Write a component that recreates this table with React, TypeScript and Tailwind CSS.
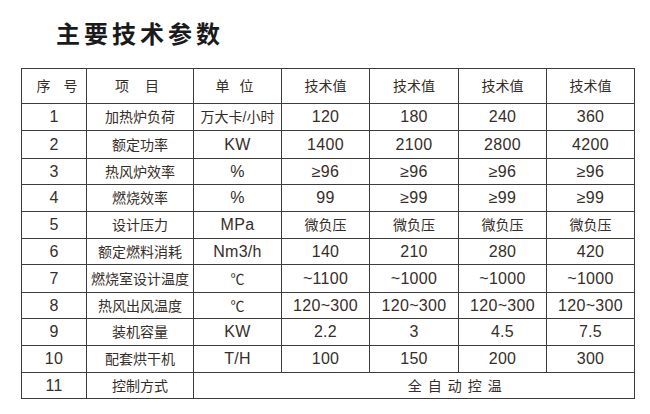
import React from 'react';

type Row = { no: string; item: string; unit: string; vals: string[]; h: string };

const rows: Row[] = [
  { no: '1', item: '加热炉负荷', unit: '万大卡/小时', vals: ['120', '180', '240', '360'], h: 'h-[27px]' },
  { no: '2', item: '额定功率', unit: 'KW', vals: ['1400', '2100', '2800', '4200'], h: 'h-[28px]' },
  { no: '3', item: '热风炉效率', unit: '%', vals: ['≥96', '≥96', '≥96', '≥96'], h: 'h-[26px]' },
  { no: '4', item: '燃烧效率', unit: '%', vals: ['99', '≥99', '≥99', '≥99'], h: 'h-[27px]' },
  { no: '5', item: '设计压力', unit: 'MPa', vals: ['微负压', '微负压', '微负压', '微负压'], h: 'h-[27px]' },
  { no: '6', item: '额定燃料消耗', unit: 'Nm3/h', vals: ['140', '210', '280', '420'], h: 'h-[26px]' },
  { no: '7', item: '燃烧室设计温度', unit: '℃', vals: ['~1100', '~1000', '~1000', '~1000'], h: 'h-[28px]' },
  { no: '8', item: '热风出风温度', unit: '℃', vals: ['120~300', '120~300', '120~300', '120~300'], h: 'h-[26px]' },
  { no: '9', item: '装机容量', unit: 'KW', vals: ['2.2', '3', '4.5', '7.5'], h: 'h-[27px]' },
  { no: '10', item: '配套烘干机', unit: 'T/H', vals: ['100', '150', '200', '300'], h: 'h-[27px]' },
];

const cell = 'border border-[#3c3c3c] p-0 text-center align-middle whitespace-nowrap';

// 中文字稍小，数字和字母稍大
const isCjk = (s: string) => /[\u4e00-\u9fff\u2103]/.test(s);

function Cell({ text }: { text: string }) {
  return (
    <td className={`${cell} ${isCjk(text) ? 'text-[14px]' : 'text-[16px] tracking-[0.3px]'}`}>
      {text}
    </td>
  );
}

export default function App() {
  return (
    <div className="w-[650px] h-[414px] bg-white overflow-hidden font-['Liberation_Sans','Noto_Sans_CJK_SC',sans-serif] text-[#352e28]">
      {/* 标题 */}
      <h1 className="pl-[56px] pt-[18px] h-[68px] text-[24px] leading-[30px] font-bold tracking-[4px] text-[#1a1a1a] font-['Noto_Sans_CJK_SC',sans-serif]">
        主要技术参数
      </h1>
      <table className="ml-[21px] w-[613px] border-collapse table-fixed text-[14px] leading-none">
        <colgroup>
          <col className="w-[65px]" />
          <col className="w-[107px]" />
          <col className="w-[88px]" />
          <col className="w-[88px]" />
          <col className="w-[89px]" />
          <col className="w-[88px]" />
          <col className="w-[88px]" />
        </colgroup>
        <tbody>
          <tr className="h-[35px]">
            <td className={cell}>
              <span className="inline-flex gap-[13px] pl-[6px]"><span>序</span><span>号</span></span>
            </td>
            <td className={cell}>
              <span className="inline-flex gap-[16px] pr-[6px]"><span>项</span><span>目</span></span>
            </td>
            <td className={cell}>
              <span className="inline-flex gap-[10px] pr-[6px]"><span>单</span><span>位</span></span>
            </td>
            <td className={cell}>技术值</td>
            <td className={cell}>技术值</td>
            <td className={cell}>技术值</td>
            <td className={cell}>技术值</td>
          </tr>
          {rows.map((r) => (
            <tr key={r.no} className={r.h}>
              <Cell text={r.no} />
              <Cell text={r.item} />
              <Cell text={r.unit} />
              {r.vals.map((v, i) => (
                <Cell key={i} text={v} />
              ))}
            </tr>
          ))}
          <tr className="h-[26px]">
            <Cell text="11" />
            <Cell text="控制方式" />
            <td className={`${cell} border-r-0`}></td>
            <td colSpan={4} className={`${cell} border-l-0 tracking-[6px]`}>
              全自动控温
            </td>
          </tr>
        </tbody>
      </table>
    </div>
  );
}
